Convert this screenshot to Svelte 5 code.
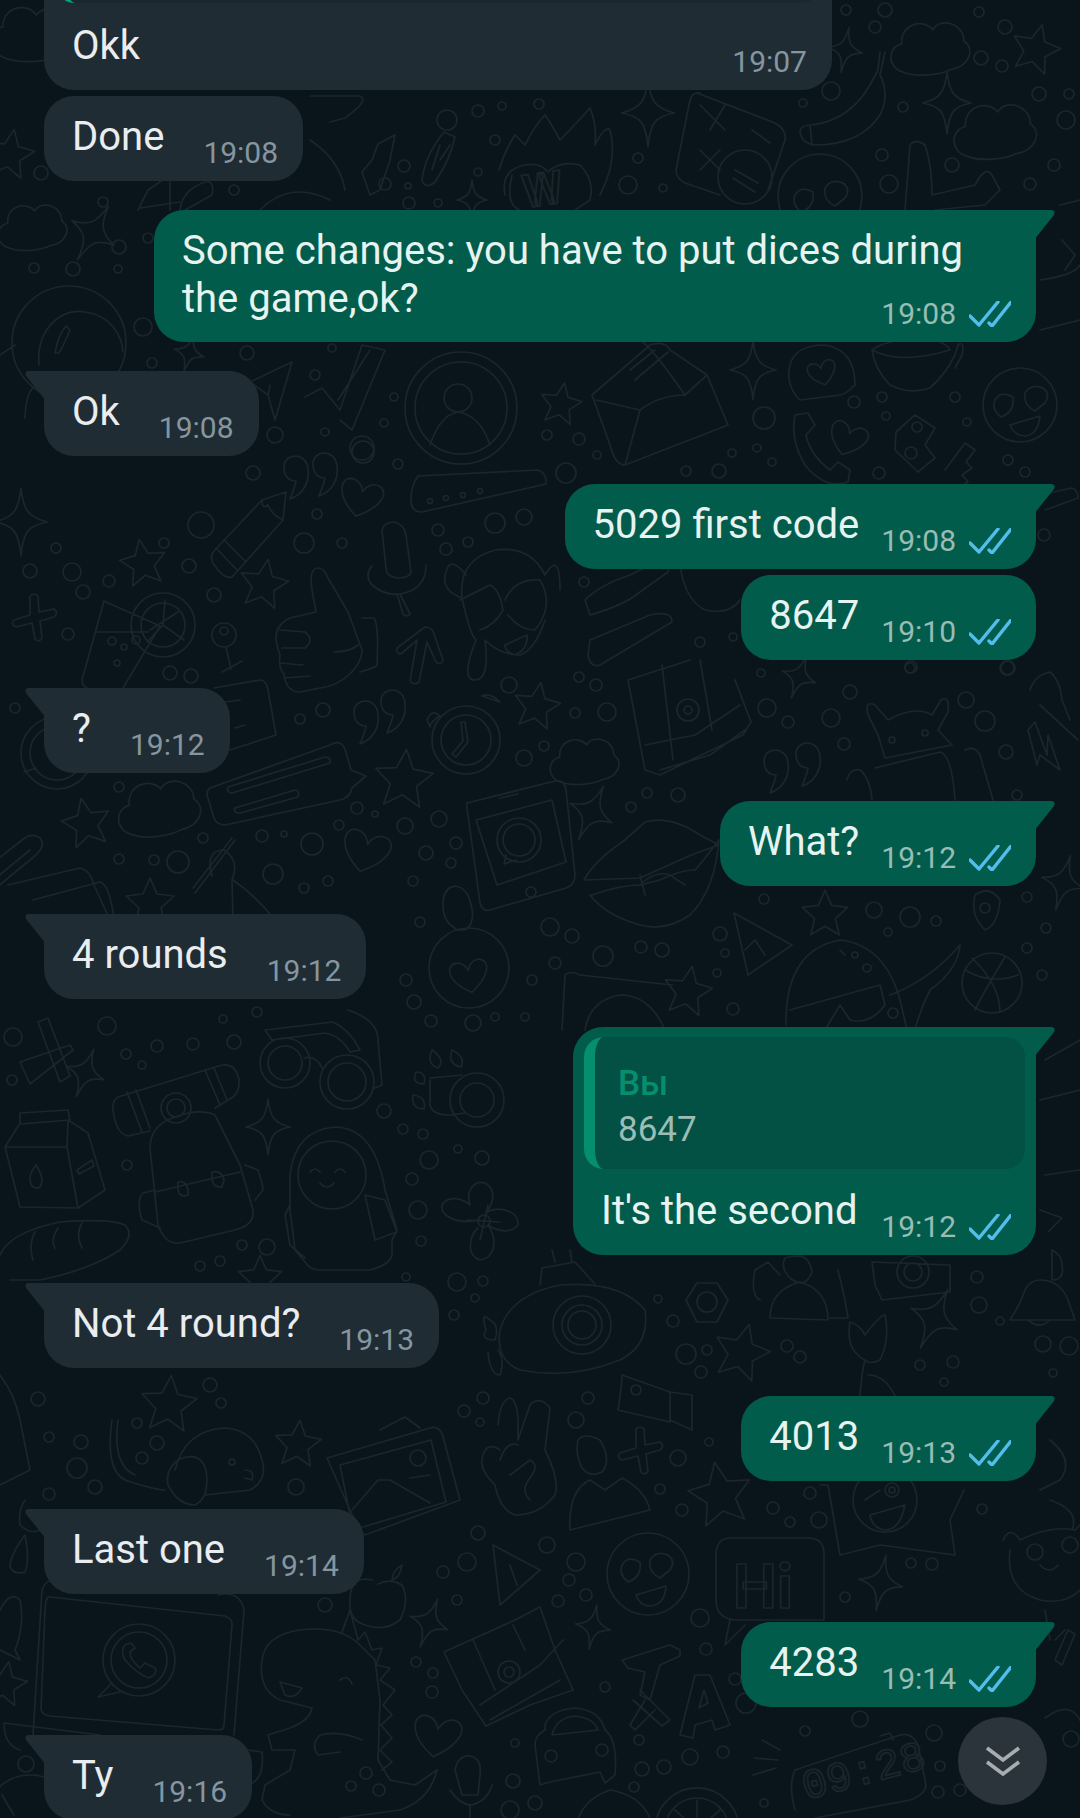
<script>
  const c = (x, y, r) => `M${x - r} ${y}a${r} ${r} 0 1 0 ${2 * r} 0a${r} ${r} 0 1 0 ${-2 * r} 0Z`;
  const dotText = `56,548,5;30,571,7;72,572,9;83,592,7;109,581,6;164,543,5;189,566,7;201,525,13;253,473,7;317,514,5;304,543,10;342,543,5;363,452,11;398,464,5;438,530,6;446,549,6;468,542,5;495,523,10;524,517,8;214,595,7;68,634,6;170,673,7;191,676,7;323,710,7;300,719,5;509,685,8;544,746,5;524,758,8;15,708,5;119,787,5;357,808,6;375,814,3;339,825,5;405,826,8;439,819,8;426,853,7;456,843,6;451,863,5;413,881,5;262,836,6;284,834,3;312,844,11;203,838,5;119,859,5;154,860,5;178,862,11;273,874,10;304,888,5;328,881,5;447,120,10;478,111,6;502,106,4;539,104,5;495,140,5;404,166,6;385,184,6;408,186,3;478,172,4;409,203,6;438,203,4;638,158,5;628,185,9;663,188,4;831,91,9;803,103,4;882,155,6;952,165,7;903,107,5;889,184,9;1054,165,6;1030,184,6;846,10,5;885,10,7;875,27,6;979,12,5;1005,27,7;981,58,7;1002,66,6;1039,94,7;1069,94,5;1066,120,9;764,418,11;854,402,6;882,397,5;886,416,4;955,397,5;967,422,4;757,448,4;732,453,4;772,462,4;719,471,7;686,471,5;879,473,6;1008,460,5;1025,472,5;547,435,5;579,439,6;597,455,4;566,473,10;1044,535,6;584,582,5;700,642,5;733,637,4;910,668,5;1008,668,7;579,677,5;596,685,6;575,713,5;607,712,9;647,793,5;678,795,7;631,807,5;761,673,4;850,692,7;767,708,9;788,722,6;831,718,9;844,744,6;911,667,6;966,700,8;985,721,10;1006,752,7;1007,668,7;1017,795,5;764,899,5;874,910,8;910,917,10;936,921,5;1027,897,5;888,932,4;1046,928,5;1027,948,5;720,934,7;725,953,4;717,973,4;550,927,9;572,936,7;603,956,10;641,947,6;662,950,7;555,963,6;532,980,5;406,980,6;414,1002,7;431,1021,6;473,1023,8;495,1017,4;525,1017,4;1042,975,5;733,1009,6;893,1013,5;420,922,5;13,1037,9;107,1026,9;223,1019,4;257,1012,5;126,1054,5;157,1046,6;193,1044,6;234,1042,7;142,1065,4;12,1080,5;127,1165,5;384,1111,7;403,1129,5;423,1134,5;458,1149,4;429,1160,9;482,1158,7;412,1179,6;418,1210,9;421,1241,5;242,1245,5;267,1247,8;220,1261,5;200,1266,5;406,1277,4;457,1282,9;483,1281,5;475,1298,4;454,1315,5;210,1385,7;38,1399,7;221,1403,5;137,1423,5;49,1437,5;81,1442,7;157,1443,7;142,1458,6;77,1468,10;95,1487,7;49,1494,6;296,1487,8;325,1605,7;416,1662,5;433,1673,5;432,1692,6;26,1764,8;366,1773,6;351,1786,5;379,1790,6;515,1743,4;658,1299,4;673,1321,6;686,1354,10;707,1350,5;701,1372,6;787,1346,6;800,1357,6;920,1365,5;953,1362,6;944,1382,4;979,1305,8;1000,1321,4;977,1277,6;1043,1344,8;1069,1346,9;1053,1373,4;483,1398,6;464,1411,6;480,1422,4;588,1398,6;576,1420,8;709,1442,4;678,1458,8;660,1489,5;682,1510,6;810,1493,6;773,1508,6;790,1522,5;819,1520,8;982,1509,5;911,1563,5;932,1564,6;478,1533,7;547,1545,8;467,1562,9;576,1562,9;443,1572,6;457,1600,5;569,1580,6;586,1595,6;558,1601,6;700,1618,9;845,1597,5;706,1649,6;605,1687,5;735,1679,6;746,1703,10;860,1719,8;805,1731,5;934,1733,8;639,1740,5;642,1769,7;664,1767,7;690,1757,8;723,1752,6;634,1787,5;513,1781,7;535,1803,7;510,1810,9;764,1803,4;940,1766,5;938,1792,6;960,1790,6;1071,1739,8;41,173,7;103,202,5;234,190,5;34,268,5;73,269,7;118,269,4;119,247,7;148,238,5;143,327,9;152,363,5;247,353,7;332,348,4;315,375,5;394,397,4;384,423,4;325,432,4;275,435,8;362,448,12`;
  const dots = dotText.split(';').map((t) => t.split(',').map(Number));

  const STAR = 'M0 -24 L7 -8 L24 -6 L11 6 L15 23 L0 14 L-15 23 L-11 6 L-24 -6 L-7 -8Z';
  const SPARK = 'M0 -28 C2 -10 6 -4 22 0 C6 3 2 8 0 28 C-2 8 -6 3 -22 0 C-6 -4 -2 -10 0 -28Z';
  const HEART = 'M0 22 C-32 2 -26 -20 -11 -17 C-5 -16 -1 -10 0 -6 C2 -12 8 -19 17 -17 C30 -12 24 6 0 22Z';
  const CLOUD = 'M-26 20 C-42 14 -38 -4 -26 -5 C-26 -22 -6 -26 2 -15 C10 -26 30 -17 28 -3 C38 6 30 20 14 21 C4 25 -16 25 -26 20Z';
  const PLUS = 'M-4 -22 Q0 -26 4 -22 L5 -6 L20 -9 Q25 -5 20 -1 L6 3 L8 20 Q5 25 1 21 L-2 5 L-18 9 Q-24 6 -20 2 L-4 -3Z';
  const COMMA = 'M-12 -6 C-12 -20 10 -22 12 -4 C14 10 6 22 -6 26 C-2 16 0 10 0 8 C-8 8 -12 2 -12 -6Z';

  const stars = [[264,583,1,10],[143,562,.95,-10],[537,705,.95,10],[404,778,1.2,5],[86,822,1,-12],[150,902,1,0],[169,1403,1.15,5],[298,1443,.95,5],[825,913,.95,0],[688,990,1,10],[1036,48,1,15],[561,403,.85,10],[10,153,1,10],[5,1683,.9,10],[260,1277,.9,0],[742,1351,1.15,15],[720,1493,1.3,-10]];
  const sparks = [[21,522,1.2,0],[93,233,1.1,30],[189,353,.7,15],[648,113,1.2,0],[845,50,.8,10],[947,103,1.1,0],[753,370,1.05,0],[799,677,.8,20],[591,813,1.05,25],[1063,883,1,15],[85,1073,.9,20],[268,1127,1,0],[934,1319,1.15,25],[881,1583,1,10],[593,1627,.8,10],[429,1623,.9,20],[472,200,.7,0]];
  const hearts = [[361,497,.9,15],[366,850,1,15],[848,438,.8,20],[437,1735,1,10],[822,372,.6,-15],[469,975,.8,-10]];
  const clouds = [[34,33,1.2,0],[34,226,1,-5],[161,807,1.2,-8],[586,760,1,-5],[932,47,1.15,-5],[997,130,1.2,-5]];
  const pluses = [[34,618,1,0],[640,1451,1,0]];
  const commas = [[296,473,1,0],[325,470,1,0],[366,718,1,0],[393,707,1,0],[776,767,1,0],[808,760,1,0]];

  const doodles = [
    'M286 492 L283 520 L232 577 Q224 580 213 563 Q209 556 215 550 L262 500Z M262 500 Q262 510 268 505 Q272 515 283 520 M216 548 L237 570 M224 540 L245 561',
    'M418 476 L538 470 Q547 473 546 484 L422 512 Q411 512 411 500 Q411 485 418 476Z',
    c(430, 501, 2.5) + c(446, 498, 2.5) + c(463, 495, 2.5) + c(480, 491, 2.5),
    'M382 530 Q384 522 394 522 Q404 524 406 535 L411 572 Q410 578 398 578 Q386 577 386 568Z M372 566 Q364 575 372 585 Q385 596 400 594 Q426 590 426 565 M400 594 L410 614 Q407 618 403 614 L397 594',
    'M318 568 C311 568 310 578 312 590 L316 612 L290 618 Q275 625 276 640 Q278 650 280 655 Q278 668 284 674 Q286 692 300 692 L320 688 C345 685 362 665 362 650 L348 612 L328 578 Q324 568 318 568Z M362 618 L374 618 Q379 625 377 665 Q375 668 360 672 M280 630 L305 632 Q315 640 305 648 L282 648 M280 663 L303 665 M284 678 L310 676 M334 652 Q350 652 358 645',
    'M397 648 L425 627 Q432 627 434 634 L443 660 Q441 666 436 662 L427 642 L419 682 Q414 686 410 681 L417 640 L401 654 Q396 654 397 648Z',
    'M462 598 Q458 560 495 550 Q530 545 545 575 M462 598 Q440 590 446 572 Q450 555 466 575 M545 575 Q560 550 560 590 M462 598 Q470 635 476 640 Q460 680 475 680 Q490 680 485 640 Q500 655 520 655 Q535 650 545 620 M460 600 L490 585 Q500 590 503 610 Q495 625 480 630 M505 600 Q515 578 540 580 Q555 605 535 630 Q520 630 508 615 M505 645 L527 635 Q528 650 515 655 Q505 652 505 645Z',
    'M104 601 L160 626 L123 688 M104 601 L82 680 Q82 688 92 690 M96 632 L148 632 ' + c(163, 625, 32) + c(163, 625, 22) + 'M150 630 L178 612 M163 625 L165 600 M163 625 L184 640 M163 625 L147 642' + c(112, 641, 4) + c(124, 647, 3) + c(136, 640, 4) + c(117, 663, 3),
    c(224, 635, 12) + c(224, 631, 4) + 'M226 647 L231 669 M222 672 L242 661',
    'M214 688 L260 680 Q266 680 268 690 L276 735 L230 750 M225 702 L240 700 M235 728 L245 725',
    c(466, 740, 34) + c(466, 740, 25) + 'M465 722 L468 742 L456 757 L452 754 L463 741 L461 722Z M427 720 Q432 708 440 716 Q430 722 430 727Z M482 696 Q490 692 500 702 Q488 698 482 696Z',
    c(57, 753, 36) + c(57, 753, 27) + 'M36 768 L24 772',
    'M210 788 L330 745 Q342 738 346 752 L351 770 L366 776 L352 788 Q350 798 340 800 L225 825 Q217 825 214 818 L207 795 Q207 790 210 788Z M228 787 L325 757 Q332 758 330 763 L232 793 Q226 792 228 787Z M235 808 L295 790 Q300 790 298 797 L240 813 Q233 813 235 808Z',
    'M467 803 L555 781 Q565 780 566 790 L575 875 Q575 885 566 888 L490 910 Q482 912 480 903 L468 815 Q466 805 467 803Z M476 820 L552 800 L566 862 L497 885Z M500 798 L518 794' + c(531, 892, 5) + c(519, 840, 22) + c(519, 840, 16) + 'M506 855 L504 864 L516 860',
    'M443 905 C443 885 458 880 468 895 C478 920 470 932 458 930 C448 925 443 918 443 905Z',
    'M-4 888 L36 855 Q46 845 40 838 Q32 832 22 840 L-6 862 M-4 878 L30 850',
    'M195 893 L235 840 M193 888 L232 838 M212 876 Q205 850 224 850 Q240 860 232 880 M233 880 Q255 895 275 920 M232 880 L233 920',
    'M8 885 L80 868 Q90 870 94 885 L110 920 M33 900 L100 882 Q110 885 114 920',
    'M150 1148 Q150 1125 175 1117 Q200 1108 215 1115 L240 1165 L253 1210 Q255 1225 235 1230 L180 1243 Q165 1245 158 1225Z M155 1192 L240 1172 M245 1165 L258 1170 Q263 1185 263 1190 L255 1200 M155 1190 L143 1193 Q136 1200 142 1220 L160 1228 M178 1182 Q186 1180 188 1190 L188 1195 Q180 1198 178 1190Z M212 1172 Q222 1170 224 1180 L222 1187 Q214 1188 212 1180Z' + c(176, 1108, 15) + c(176, 1108, 9),
    'M118 1097 L222 1065 Q236 1063 239 1080 Q240 1095 228 1100 L215 1108 M150 1131 L128 1136 Q116 1134 113 1110 Q112 1100 118 1097 M127 1092 L142 1132 M136 1090 L150 1128 M205 1070 L220 1105 M214 1068 L227 1100',
    'M20 1113 L68 1110 L70 1120 L20 1124Z M20 1123 L5 1147 L67 1147 L68 1120 L88 1133 L105 1190 L78 1208 L67 1147 M5 1147 L20 1207 L78 1208 M36 1165 C42 1175 44 1180 40 1187 C34 1190 30 1186 30 1178 C30 1172 34 1168 36 1165Z M77 1170 L92 1160 L94 1166 L79 1174Z',
    'M290 1210 L290 1175 Q295 1130 335 1127 Q375 1128 385 1190 L397 1230 L392 1240 L392 1255 Q390 1265 370 1270 L320 1270 Q310 1270 305 1262 L295 1250Z M365 1195 L385 1200 L397 1232 L375 1240Z M290 1205 L285 1215 L290 1245 L305 1258 M310 1172q5-6 10 0 M335 1172q5-6 10 0 M320 1183q7 8 14 0' + c(332, 1175, 34),
    'M0 1255 Q10 1232 60 1222 Q110 1218 125 1225 Q135 1235 120 1250 Q90 1270 40 1280 L10 1280 M35 1232 Q28 1245 33 1260 M58 1228 Q50 1240 55 1248 M82 1223 Q75 1235 82 1248',
    c(285, 1063, 25) + c(285, 1063, 17) + c(347, 1082, 27) + c(347, 1082, 19) + 'M265 1030 L333 1022 Q350 1030 360 1050 L350 1052 Q340 1035 325 1033 L272 1040Z M348 1010 Q378 1020 378 1040 L382 1085 L375 1088 M304 1058 Q316 1055 322 1068',
    'M38 1022 L60 1082 L70 1076 L48 1018Z M20 1062 L70 1045 L73 1050 L30 1084Z',
    c(477, 1100, 27) + c(477, 1100, 17) + 'M430 1080 L430 1105 Q432 1115 450 1115 L465 1113 M430 1078 L462 1075 M416 1072 q-5 12 8 12 q3 -12 -8 -12Z M432 1050 q-6 14 6 18 q8 -8 -6 -18Z M452 1050 q-5 14 9 17 q5 -10 -9 -17Z M413 1095 q-2 14 11 14 q3 -12 -11 -14Z',
    'M480 1220 C455 1225 440 1215 442 1205 C448 1195 462 1198 470 1205 C465 1190 475 1180 485 1183 C495 1188 495 1200 487 1212 C500 1205 520 1212 518 1225 C510 1235 495 1230 488 1225 C498 1240 495 1258 480 1260 C465 1255 470 1235 478 1228' + c(484, 1221, 6) + 'M467 1220 L500 1222 M480 1240 L488 1205',
    'M175 1470 Q185 1430 225 1428 Q255 1430 262 1460 Q268 1480 250 1490 L205 1495 M178 1460 Q165 1470 168 1485 Q178 1505 195 1505 Q210 1498 206 1470 Q200 1450 178 1460Z M245 1470 Q255 1470 252 1480 L245 1478' + c(232, 1462, 3),
    'M112 1420 Q105 1470 125 1480 Q155 1490 165 1490 M118 1420 Q112 1465 135 1475',
    'M327 1458 L430 1428 Q440 1425 443 1437 L460 1500 L365 1535 Q360 1532 350 1510Z M340 1465 L431 1440 L446 1502 L353 1530Z M352 1510 L378 1480 L390 1480 L430 1503 M410 1478 L430 1475 M380 1430 L405 1417 L420 1428' + c(418, 1458, 8),
    'M498 1425 Q500 1400 510 1398 Q517 1400 518 1420 L518 1440 L530 1405 Q540 1395 550 1408 L545 1450 Q560 1480 555 1495 Q540 1515 515 1515 Q500 1510 495 1485 Q480 1470 482 1460 Q485 1440 500 1450 M500 1460 Q507 1440 518 1445 M510 1475 L530 1460 Q540 1465 530 1478 Q520 1490 530 1500',
    'M42 1590 L33 1735 M50 1597 Q46 1595 45 1610 L41 1710 Q43 1715 50 1716 L218 1730 Q224 1730 224 1725 L232 1625 Q232 1618 225 1616 Z M42 1590 Q45 1580 55 1580 M218 1595 Q240 1590 244 1610 L234 1735 M4 1723 L100 1735 M4 1723 Q4 1745 20 1750 M248 1750 L262 1752 Q265 1780 248 1785' + c(139, 1660, 36) + c(139, 1660, 28) + 'M112 1683 L98 1697 L120 1692 M125 1645 Q120 1650 125 1660 Q135 1672 148 1678 Q158 1675 155 1668 L145 1663 L140 1668 Q130 1660 130 1652 L135 1648 L131 1643Z',
    'M372 1580 Q350 1575 350 1600 Q348 1620 365 1625 Q385 1632 400 1620 Q410 1600 402 1585 Q390 1578 378 1584 M392 1580 Q393 1570 402 1565 Q400 1578 392 1580Z',
    'M262 1660 Q265 1635 300 1630 Q340 1625 360 1645 L375 1660 L380 1700 L378 1760 L390 1780 L415 1785 L437 1770 Q430 1800 400 1810 L340 1818 M262 1660 Q258 1690 280 1700 L312 1708 Q310 1720 290 1728 L268 1735 L272 1750 L295 1750 L290 1770 L265 1785 L262 1800 Q270 1815 290 1815 M280 1682 L302 1688 Q295 1700 285 1695Z M340 1680 q8 -6 12 4 M342 1632 L350 1610 L358 1640 M358 1640 L365 1632 L372 1650 L382 1648 L376 1665 L390 1668 L380 1680 L395 1690 L383 1705 L392 1715 L381 1725 L392 1738 L380 1750 L392 1762 L382 1770 M362 1740 Q340 1730 320 1735 Q310 1745 318 1755 L340 1752',
    'M444 1652 L515 1620 L540 1607 L555 1650 L573 1690 L530 1705 L486 1726 L462 1690Z M473 1640 L495 1690 M513 1625 L525 1650 M480 1705 L540 1665 L563 1640 M490 1720 L560 1680' + c(509, 1672, 11) + c(509, 1672, 5),
    'M493 1545 L540 1570 L500 1605 Z M510 1565 L517 1585',
    'M500 1330 Q510 1295 560 1285 Q620 1280 645 1310 Q650 1345 620 1360 Q570 1380 520 1370 Q495 1360 500 1330Z M540 1285 L542 1268 L575 1262 L595 1284 M555 1262 L552 1250 M572 1262 L570 1250 M495 1340 Q480 1340 486 1330 Q480 1310 490 1320 Q500 1325 495 1340Z M488 1352 Q490 1375 500 1375 Q505 1360 498 1350' + c(582, 1325, 29) + c(582, 1325, 20) + c(582, 1325, 14),
    c(707, 1302, 10) + 'M697 1283 L717 1283 L728 1300 L717 1322 L697 1322 L686 1300Z',
    'M770 1318 Q770 1290 800 1282 Q828 1290 828 1320Z M785 1258 Q780 1268 790 1278 Q805 1290 812 1272 Q810 1258 800 1256 Q790 1256 785 1258Z M760 1300 Q750 1295 755 1270 L768 1262 L780 1275 M838 1270 L845 1300 L848 1318 L830 1318',
    'M872 1262 L950 1265 L950 1292 L882 1300 L875 1285Z' + c(913, 1272, 16) + c(913, 1272, 9),
    'M1040 1280 Q1060 1280 1068 1300 L1075 1320 L1010 1320 Q1020 1305 1025 1290 Q1030 1280 1040 1280Z M1052 1250 L1052 1280 Q1065 1280 1062 1265 Q1062 1255 1052 1250Z M1028 1320 Q1040 1330 1050 1320',
    'M860 1396 Q862 1370 865 1360 Q845 1350 850 1322 Q860 1325 865 1335 Q880 1315 885 1315 Q890 1340 880 1360 Q870 1365 865 1360 M868 1375 Q885 1375 895 1396',
    'M622 1375 L670 1392 L670 1422 L618 1410 Q622 1385 622 1375Z M670 1392 L692 1395 L692 1430 L670 1420' + c(636, 1390, 5),
    'M578 1440 Q585 1432 600 1440 Q612 1460 602 1472 Q590 1478 582 1468 Q575 1455 578 1440Z M570 1530 Q568 1490 590 1480 L605 1490 L622 1478 Q645 1490 650 1510Z',
    'M828 1485 L840 1555 L880 1545 L955 1555 L950 1520 L964 1490 M820 1485 L828 1485' + c(885, 1500, 32) + c(892, 1490, 7) + c(892, 1490, 3) + 'M865 1500 L880 1490 M870 1515 L905 1505 Q900 1530 885 1530 Q872 1528 870 1515Z',
    'M1003 1540 Q1010 1525 1020 1540 Q1050 1525 1075 1530 L1080 1525 M1010 1550 Q1005 1590 1040 1600 Q1065 1605 1080 1590 M1045 1610 L1050 1640 M1065 1630 L1055 1640' + c(1035, 1552, 8) + c(1070, 1545, 8) + 'M1040 1565 Q1050 1575 1058 1565',
    c(648, 1574, 41) + 'M622 1565 q6 -10 18 -3 q2 15 -12 20 q-10 -8 -6 -17Z M650 1560 q6 -10 18 -5 q8 6 2 15 l-10 8 q-12 -6 -10 -18Z M636 1595 L666 1586 Q665 1605 650 1606 Q640 1606 636 1595Z',
    c(1020, 405, 37) + 'M995 400 q6 -10 18 -3 q2 15 -12 20 q-10 -8 -6 -17Z M1025 393 q6 -10 18 -5 q8 6 2 15 l-10 8 q-12 -6 -10 -18Z M1010 425 L1040 416 Q1038 435 1025 436 Q1015 436 1010 425Z',
    c(820, 196, 42) + 'M795 195 q6 -10 18 -3 q2 15 -12 20 q-10 -8 -6 -17Z M825 188 q6 -10 18 -5 q8 6 2 15 l-10 8 q-12 -6 -10 -18Z',
    'M730 1538 L808 1538 Q824 1538 824 1554 L824 1620 L735 1620 Q716 1618 716 1600 L716 1552 Q718 1538 730 1538Z M730 1620 L725 1645 L745 1625',
    'M622 1660 L670 1645 L680 1650 L680 1656 L660 1665 L650 1700 L640 1695 L645 1672 L628 1668Z M640 1690 L670 1720 L662 1726 L633 1700 M645 1700 L630 1725 L635 1730 L655 1710',
    'M680 1735 L695 1675 L710 1675 L730 1725 L715 1730 L712 1720 L695 1725 L693 1738Z M699 1708 L704 1690 L708 1703Z',
    'M545 1725 Q550 1710 575 1708 Q600 1710 605 1730 Q618 1740 615 1775 L605 1783 L600 1772 L550 1782 L540 1785 L535 1745 Q535 1735 545 1730Z M552 1735 Q556 1718 575 1716 Q594 1718 598 1730Z' + c(551, 1756, 6) + c(602, 1750, 6),
    'M762 1740 L780 1750 M754 1758 L778 1760 M753 1775 L776 1768',
    'M795 1770 L900 1735 Q912 1732 918 1745 L926 1785 Q925 1795 910 1800 L815 1818 M795 1770 Q788 1785 795 1810 M880 1736 L890 1733 L893 1740',
    'M455 1770 Q458 1755 470 1756 Q482 1758 480 1775 L478 1795 L462 1795Z M450 1790 Q460 1805 472 1805 Q488 1800 492 1785 M470 1805 L470 1818',
    c(697, 1830, 42) + c(697, 1830, 32) + 'M697 1830 L697 1800 M697 1830 L675 1810 M697 1830 L720 1810',
    'M575 1830 Q580 1800 610 1790 Q640 1795 650 1818',
    'M499 170 Q505 150 515 135 L525 145 Q535 125 545 115 Q552 125 560 140 Q575 125 590 108 Q597 125 595 145 Q605 125 610 130 Q618 160 600 195 M512 175 Q505 205 520 210 M505 195 Q500 170 525 165 Q540 162 548 172 Q560 160 580 165 Q595 180 590 200 L575 210',
    'M697 93 L775 123 Q787 130 785 140 L768 190 M700 93 Q692 92 690 100 L676 170 Q676 178 685 183 L720 195 M700 105 L725 130 M725 105 L710 130 M700 150 L720 170 M720 150 L700 170 M752 130 L770 143' + c(745, 177, 27) + 'M735 170 L758 183 M733 178 L755 192',
    'M885 52 L880 75 Q890 95 880 115 Q860 145 815 145 Q800 143 800 130 Q802 125 812 125 Q850 120 870 85 L878 70 L880 52 M810 125 L812 145',
    'M905 210 L910 145 Q915 138 925 145 Q932 165 932 195 L975 185 Q985 165 992 175 L1000 190 L985 205 L935 210',
    'M592 395 L650 345 Q665 340 670 350 L707 375 L728 425 L625 465 Q615 465 610 445Z M596 400 L640 410 Q660 395 685 395 L707 375 M640 410 L625 465 M685 395 Q650 345 640 340 M630 370 L655 350 M635 380 L668 352',
    'M790 365 Q795 345 825 345 Q855 350 855 385 Q845 395 840 395 L800 400 Q785 385 790 365Z',
    'M872 350 Q875 370 890 385 Q910 395 930 388 Q945 375 955 355 L958 345 Q965 340 962 355 L955 368 M872 350 Q900 365 950 350 Q945 340 920 338 Q885 340 872 350Z',
    'M795 415 L808 413 L815 425 L806 435 Q810 455 830 470 L838 462 L850 470 L848 482 Q825 490 805 465 Q790 440 795 415Z',
    'M896 432 L915 415 L935 428 L925 445 L935 458 L918 472 L895 450Z M945 470 L965 443 L975 450 L966 462 L972 468 L962 475 L968 482 L955 490' + c(917, 427, 5) + c(911, 453, 6),
    c(69, 343, 57) + 'M39 365 C36 330 60 308 85 312 C110 315 122 335 123 352 M55 353 Q58 335 66 326 L70 330 Q64 345 59 353Z M0 355 L15 345 M25 418 Q26 385 40 385 L100 390',
    'M250 382 L292 362 L275 420 L268 395 Z M268 395 L270 385',
    'M305 397 L322 388 L340 410 L362 345 L385 350 L352 430 L340 420 M338 400 L370 350',
    c(461, 408, 56) + c(461, 408, 46) + c(458, 398, 14) + 'M430 445 Q440 415 458 412 Q480 415 490 445',
    'M378 144 L372 160 L362 172 L370 195 L380 190 L390 160 L395 135Z M444 132 L455 137 Q450 160 435 182 Q425 190 422 180 Q425 155 444 132Z M440 145 L432 170 M450 145 L440 160',
    'M310 96 L360 96 Q370 100 345 118 L330 122 M310 140 Q340 160 345 190 M260 210 Q290 180 330 200',
    'M138 210 L148 190 L170 175 L170 210 M140 208 L180 202 M180 210 Q182 190 205 182 Q215 180 212 195 L185 210',
    'M628 680 L690 660 M628 680 L645 770 L660 775 L743 735 L751 722 L735 680 M645 745 L695 735 L740 705 M660 770 L710 755 L745 730 M662 665 L673 760 M700 660 L712 730' + c(688, 710, 11) + c(688, 710, 4),
    'M585 600 Q600 585 630 575 L660 560 Q672 560 668 572 L640 592 Q625 605 590 615 Z M590 640 L650 615 Q672 610 672 622 L600 665 Q590 668 588 655Z',
    'M680 565 Q685 600 705 610 Q730 615 740 600',
    'M878 735 L868 715 Q864 700 875 705 L888 720 Q915 705 932 715 L941 700 Q950 695 948 712 L938 730 L952 745 L885 758 Z' + c(892, 740, 3) + c(925, 733, 3) + 'M875 768 L940 752 Q952 755 955 800 M847 780 Q850 768 860 770 Q870 778 872 800 M965 750 Q975 745 980 755 L993 800',
    'M1028 730 L1035 722 L1047 755 L1048 735 L1060 770 L1040 755 L1037 765Z',
    'M1030 690 Q1035 675 1050 672 Q1060 680 1062 700 L1070 720 M1040 705 L1078 740',
    'M584 880 Q595 860 625 840 L645 822 Q670 815 700 835 L719 845 Q690 855 680 860 L640 878Z M592 895 Q620 885 640 885 L660 880 Q680 870 695 870 Q700 865 719 840 Q715 890 690 915 Q665 932 640 925 Q605 915 590 895Z M640 875 L645 895 M640 885 Q655 870 670 875 L685 885',
    'M734 913 L792 945 L748 975Z M745 950 L755 940 L765 955',
    'M975 895 Q990 885 1000 900 Q998 925 985 930 Q970 915 975 895Z' + c(985, 908, 5),
    'M786 1025 Q785 950 840 940 Q885 945 900 1000 L907 1030 M790 1010 L880 985 L885 1005 Q870 1025 850 1020 L840 1005 L825 1030 M840 950 L845 955' + c(855, 955, 3) + c(867, 968, 4),
    'M890 995 Q930 980 960 945 Q958 970 930 990 Q920 1010 915 1030',
    c(992, 983, 30) + 'M965 970 Q990 985 1018 975 M972 958 Q1000 985 1000 1012 M1005 957 Q985 990 975 1010',
    c(469, 968, 40),
    'M562 1030 L565 975 Q570 970 580 975 L672 985 M585 1030 Q590 1000 620 995 Q650 995 665 1030',
    c(30, 1820, 45) + 'M2 1795 L14 1815',
    'M25 1535 Q10 1555 10 1567 Q14 1575 25 1572 Q30 1560 25 1535Z M25 1500 Q18 1510 20 1525 Q30 1535 40 1530',
    'M0 1610 Q10 1590 20 1600 Q25 1625 15 1650 L20 1660 L0 1650',
    'M0 1375 Q15 1395 20 1420 L30 1470 L0 1485',
    'M1040 495 L1072 488 Q1078 490 1078 498 L1045 510 M1040 330 L1080 320 M1040 280 Q1075 275 1080 265 M1060 205 L1080 200 M1062 240 L1075 255 L1065 270',
    'M1045 1060 L1080 1040 M1040 1100 L1080 1090 M1045 1175 L1080 1170 M1040 1210 L1062 1218 L1048 1232',
    'M1050 1440 Q1075 1460 1060 1480 L1040 1490 M1050 1500 Q1080 1510 1072 1530',
    'M1045 1718 Q1070 1700 1080 1720 M1055 1660 L1068 1630 L1075 1634 L1062 1665Z'
  ];

  const msgs = [
    { side: 'in', text: 'Done', time: '19:08', group: true },
    { side: 'out', text: 'Some changes: you have to put dices during', text2: 'the game,ok?', time: '19:08', tail: true },
    { side: 'in', text: 'Ok', time: '19:08', tail: true },
    { side: 'out', text: '5029 first code', time: '19:08', tail: true },
    { side: 'out', text: '8647', time: '19:10', group: true },
    { side: 'in', text: '?', time: '19:12', tail: true },
    { side: 'out', text: 'What?', time: '19:12', tail: true },
    { side: 'in', text: '4 rounds', time: '19:12', tail: true },
    { side: 'out', text: "It's the second", time: '19:12', tail: true, quote: { who: 'Вы', body: '8647' } },
    { side: 'in', text: 'Not 4 round?', time: '19:13', tail: true },
    { side: 'out', text: '4013', time: '19:13', tail: true },
    { side: 'in', text: 'Last one', time: '19:14', tail: true },
    { side: 'out', text: '4283', time: '19:14', tail: true },
    { side: 'in', text: 'Ty', time: '19:16', tail: true }
  ];
</script>

<div class="screen">
  <svg class="wp" width="1080" height="1818" viewBox="0 0 1080 1818" aria-hidden="true">
    {#each dots as d}<circle cx={d[0]} cy={d[1]} r={d[2]} />{/each}
    {#each stars as s}<path d={STAR} transform="translate({s[0]} {s[1]}) rotate({s[3]}) scale({s[2]})" />{/each}
    {#each sparks as s}<path d={SPARK} transform="translate({s[0]} {s[1]}) rotate({s[3]}) scale({s[2]})" />{/each}
    {#each hearts as s}<path d={HEART} transform="translate({s[0]} {s[1]}) rotate({s[3]}) scale({s[2]})" />{/each}
    {#each clouds as s}<path d={CLOUD} transform="translate({s[0]} {s[1]}) rotate({s[3]}) scale({s[2]})" />{/each}
    {#each pluses as s}<path d={PLUS} transform="translate({s[0]} {s[1]}) rotate({s[3]}) scale({s[2]})" />{/each}
    {#each commas as s}<path d={COMMA} transform="translate({s[0]} {s[1]}) scale({s[2]})" />{/each}
    {#each doodles as d}<path d={d} />{/each}
    <text x="733" y="1608" class="wpt hi">Hi</text>
    <text x="0" y="0" class="wpt clock" transform="translate(806 1800) rotate(-15)">09:28</text>
    <text x="0" y="0" class="wpt w" transform="translate(525 208) rotate(-8)">W</text>
  </svg>

  <div class="chat">
    <div class="row in">
      <div class="bubble first">
        <div class="q q-in"></div>
        <div class="line">
          <span class="text">Okk</span>
          <span class="meta"><span class="time">19:07</span></span>
        </div>
      </div>
    </div>

    {#each msgs as m}
      <div class="row {m.side}" class:group={m.group}>
        <div class="bubble" class:tail={m.tail} class:multi={m.text2}>
          {#if m.quote}
            <div class="q">
              <div class="who">{m.quote.who}</div>
              <div class="body">{m.quote.body}</div>
            </div>
          {/if}
          {#if m.text2}
            <div class="text block">{m.text}<br />{m.text2}</div>
            <div class="meta-wrap">
              <span class="time">{m.time}</span>
              <svg class="ticks" width="42" height="26" viewBox="0 0 42 26"><path d="M1 15 L10 24 L29 1 M20 22 L23 25 L42 1" /></svg>
            </div>
          {:else}
            <div class="line" class:after-q={m.quote}>
              <span class="text">{m.text}</span>
              <span class="meta">
                <span class="time">{m.time}</span>
                {#if m.side === 'out'}
                  <svg class="ticks" width="42" height="26" viewBox="0 0 42 26"><path d="M1 15 L10 24 L29 1 M20 22 L23 25 L42 1" /></svg>
                {/if}
              </span>
            </div>
          {/if}
        </div>
      </div>
    {/each}
  </div>

  <div class="fab">
    <svg width="36" height="30" viewBox="0 0 36 30"><path d="M2 2 L18 14 L34 2 M2 16 L18 28 L34 16" /></svg>
  </div>
</div>

<style>
  :global(body) {
    margin: 0;
    background: #0a151b;
  }
  .screen {
    position: relative;
    width: 1080px;
    height: 1818px;
    overflow: hidden;
    background: #0a151b;
    font-family: Roboto, "Noto Sans", sans-serif;
  }
  .wp {
    position: absolute;
    inset: 0;
    fill: none;
    stroke: #1a262c;
    stroke-width: 1.7;
    stroke-linejoin: round;
    stroke-linecap: round;
  }
  .wp path {
    vector-effect: non-scaling-stroke;
  }
  .wpt {
    font-family: Roboto, sans-serif;
    font-weight: 700;
  }
  .hi {
    font-size: 62px;
  }
  .clock {
    font-size: 42px;
    font-family: "Liberation Mono", monospace;
    font-weight: 400;
  }
  .w {
    font-size: 46px;
  }
  .chat {
    position: relative;
    display: flex;
    flex-direction: column;
    margin-top: -101px;
    padding: 0 44px;
  }
  .row {
    display: flex;
    margin-top: 28px;
  }
  .row.group {
    margin-top: 6px;
  }
  .row:first-child {
    margin-top: 0;
  }
  .row.in {
    justify-content: flex-start;
  }
  .row.out {
    justify-content: flex-end;
  }
  .bubble {
    position: relative;
    border-radius: 30px;
    padding: 10px 11px 0;
    box-sizing: border-box;
  }
  .in .bubble {
    background: #1f2c34;
  }
  .out .bubble {
    background: #025c4c;
  }
  .bubble.tail::after {
    content: "";
    position: absolute;
    top: 0;
    width: 22px;
    height: 30px;
    background: inherit;
  }
  .out .bubble.tail {
    border-top-right-radius: 0;
  }
  .out .bubble.tail::after {
    right: -20px;
    clip-path: path("M0 0 H17 Q22 0 20 5 L0 30 Z");
  }
  .in .bubble.tail {
    border-top-left-radius: 0;
  }
  .in .bubble.tail::after {
    left: -20px;
    clip-path: path("M22 0 H5 Q0 0 2 5 L22 30 Z");
  }
  .first {
    width: 788px;
  }
  .line {
    display: flex;
    align-items: flex-end;
    padding: 4px 14px 0 17px;
  }
  .line.after-q {
    padding-top: 15px;
  }
  .text {
    font-size: 40px;
    line-height: 48px;
    color: #e9edef;
    padding-top: 3px;
    padding-bottom: 20px;
    white-space: nowrap;
  }
  .in .text {
    margin-right: 39px;
  }
  .out .text {
    margin-right: 22px;
    color: #e7f3f0;
  }
  .first .text {
    margin-right: auto;
  }
  .first .line {
    padding-top: 16px;
  }
  .time {
    font-size: 30px;
    line-height: 30px;
    color: #8696a0;
    white-space: nowrap;
  }
  .out .time {
    color: #98bdb5;
  }
  .meta {
    display: flex;
    align-items: center;
    gap: 13px;
    margin-left: auto;
    margin-bottom: 13px;
  }
  .ticks {
    fill: none;
    stroke: #53bdeb;
    stroke-width: 3.4;
    stroke-linecap: round;
    stroke-linejoin: round;
  }
  .bubble.multi {
    margin: 1px 0;
    padding: 14px 25px 0 28px;
  }
  .out .text.block {
    margin-right: 48px;
    line-height: 47.5px;
    padding-top: 3px;
    padding-bottom: 20px;
  }
  .meta-wrap {
    display: flex;
    justify-content: flex-end;
    align-items: center;
    gap: 13px;
    margin-top: -43px;
    margin-bottom: 13px;
  }
  .q {
    background: #025144;
    border-left: 11px solid #068f6f;
    border-radius: 20px;
    box-sizing: border-box;
    height: 132px;
    padding: 25px 24px 0 23px;
    width: 441px;
    overflow: hidden;
  }
  .q-in {
    background: #1b2730;
    width: 766px;
    height: 94px;
    border-left-color: #06a884;
    padding: 0;
  }
  .who {
    font-size: 35px;
    line-height: 44px;
    color: #068f6f;
    font-weight: 500;
  }
  .body {
    font-size: 35px;
    line-height: 48px;
    color: #9cbdb6;
  }
  .fab {
    position: absolute;
    left: 958px;
    top: 1717px;
    width: 89px;
    height: 88px;
    border-radius: 50%;
    background: #2a343a;
    display: flex;
    align-items: center;
    justify-content: center;
  }
  .fab svg {
    fill: none;
    stroke: #a6aeb3;
    stroke-width: 3.6;
  }
</style>
